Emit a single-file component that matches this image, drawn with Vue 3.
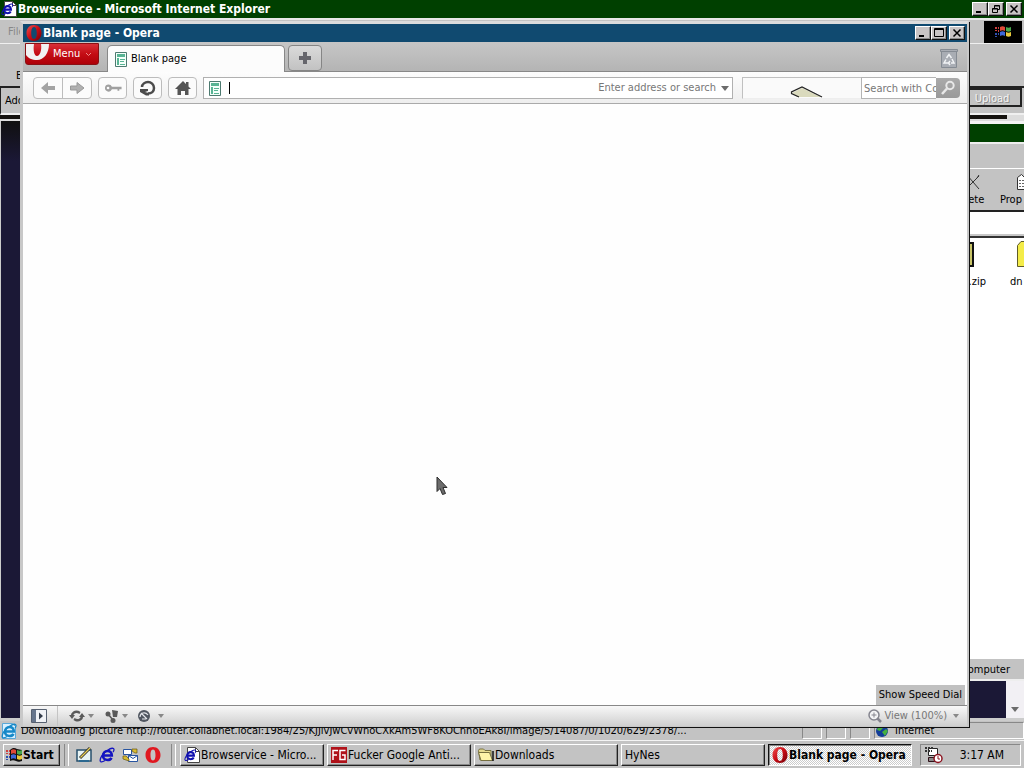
<script setup>
import { ref } from 'vue'

const address = ref('')
const search = ref('')
const tasks = [
  { icon: 'ie', label: 'Browservice - Micro...' },
  { icon: 'fg', label: 'Fucker Google Anti...' },
  { icon: 'folder', label: 'Downloads' },
  { icon: '', label: 'HyNes' },
  { icon: 'opera', label: 'Blank page - Opera', active: true }
]
</script>

<template>
  <svg class="defs" aria-hidden="true">
    <defs>
      <linearGradient id="red" x1="0" y1="0" x2="1" y2="1">
        <stop offset="0" stop-color="#f05050" /><stop offset=".5" stop-color="#c80c14" /><stop offset="1" stop-color="#700008" />
      </linearGradient>
      <symbol id="opera" viewBox="0 0 16 16">
        <path fill="url(#red)" fill-rule="evenodd" d="M8 0C3.500 0 .5 3.500.5 8s3 8 7.500 8 7.500-3.500 7.500-8S12.500 0 8 0zm0 2c2 0 2.800 3 2.800 6S10 14 8 14s-2.800-3-2.800-6S6 2 8 2z" />
      </symbol>
      <symbol id="ie-e" viewBox="0 0 16 16">
        <path fill="none" stroke="currentColor" stroke-width="2.600" d="M4.500 8.500h8.300C12.800 5.500 11 4 8.500 4S4 6 4 8.700 6 13 8.500 13c2 0 3.300-.8 4-2.200" />
        <path fill="none" stroke="currentColor" stroke-width="1.300" d="M1.500 14.500C0 12 4 6 9 3c3-2 6-2.500 6-.5 0 1-.5 2-1 2.500M1.500 14.500c1 .8 3 0 4.500-1" />
      </symbol>
      <symbol id="ie" viewBox="0 0 16 16">
        <path fill="#fff" stroke="#444" d="M3.500.5h8l4 4v11h-12z" />
        <path fill="none" stroke="#444" d="M11.500.5v4h4" />
        <g color="#1010b0" transform="translate(0 2) scale(.78)">
          <use href="#ie-e" width="16" height="16" />
        </g>
      </symbol>
      <symbol id="fg" viewBox="0 0 16 16">
        <path fill="#b0121a" d="M0 0h16v16H0z" />
        <path fill="none" stroke="#fff" stroke-width="1.500" d="M2 13V3.500h5M2 8h4M14.500 3.500H9v9h5V8h-3" />
      </symbol>
      <symbol id="folder" viewBox="0 0 16 16">
        <path fill="#e8dc90" stroke="#777040" d="M.5 3.500l1-1.500h4l1.500 1.500h6v9.500h-11z" />
        <path fill="#fff4a8" stroke="#777040" d="M.5 5.500h11l3 8H3z" />
        <path stroke="#111" stroke-width="1.500" d="M15 4v10" />
      </symbol>
      <symbol id="page" viewBox="0 0 12 15">
        <path fill="#f4fffa" stroke="#4d7a70" d="M.5.500h11v14H.5z" />
        <path fill="#58b494" d="M2 2h8v3H2zM2 6h2v7H2z" />
        <path stroke="#58b494" d="M5 7.500h5M5 9.500h4M5 12.500h5" />
      </symbol>
      <symbol id="flag" viewBox="0 0 18 16">
        <path fill="#e04a38" d="M6 3c2-1 3-1 5 0v4c-2-1-3-1-5 0z" />
        <path fill="#49a84c" d="M12 3c2 1 3 1 5 0v4c-2 1-3 1-5 0z" />
        <path fill="#3c66d8" d="M6 8c2-1 3-1 5 0v4c-2-1-3-1-5 0z" />
        <path fill="#e8c83c" d="M12 8c2 1 3 1 5 0v4c-2 1-3 1-5 0z" />
        <path fill="#d04040" d="M1 3h2v2H1zm3 0h1v2H4zM1 6h2v1H1zm3 0h1v2H4z" />
        <path fill="#3050b0" d="M1 9h2v2H1zm3 0h1v2H4zM1 12h2v1H1z" />
      </symbol>
    </defs>
  </svg>

  <div class="desktop">
    <main class="area">
      <section class="ie">
        <header class="title green">
          <svg class="i16"><use href="#ie" /></svg>
          <h1>Browservice - Microsoft Internet Explorer</h1>
          <span class="winbtns">
            <button aria-label="Minimize"><svg viewBox="0 0 12 10"><path d="M2 8h5" /></svg></button>
            <button aria-label="Restore"><svg viewBox="0 0 12 10"><path class="thin" d="M4.500 4V1.500h5v4H8M2.500 4.500h5v4h-5zM2.500 5h5M4.500 2h5" /></svg></button>
            <button class="gap" aria-label="Close"><svg viewBox="0 0 12 10"><path class="cross" d="M2.500 1.500l7 7M9.500 1.500l-7 7" /></svg></button>
          </span>
        </header>
        <div class="ie-menu">
          <button class="ghost">File</button>
          <span class="throbber"><svg><use href="#flag" /></svg></span>
        </div>
        <div class="ie-tools"><button>Back</button></div>
        <div class="ie-address">
          <span>Address</span>
          <span class="download">Upload</span>
        </div>
        <div class="ie-line"></div>
        <div class="ie-view"><div class="ie-scroll"><i class="down"></i></div></div>
        <footer class="ie-status">
          <svg class="i16" viewBox="0 0 16 16"><path fill="#d8f0ff" stroke="#5aa8d8" d="M1.500.5h10l3 3v12h-13z" /><g color="#1688c8"><use href="#ie-e" /></g></svg>
          <span class="msg">Downloading picture http://router.collabnet.local:1984/25/KJJivJwCvWnoCXkAm5WF8KOCnhoEAk8I/image/5/14087/0/1020/629/2378/...</span>
          <i class="cell"></i><i class="cell"></i><i class="cell"></i>
          <span class="zone">
            <svg class="i16" viewBox="0 0 16 16"><circle cx="7" cy="8" r="6" fill="#123c98" /><path fill="#45b040" d="M3 4l4-2 1 3-3 3-3-1zM7 9l4-3 2 2-3 5z" /><path fill="#90d8ff" d="M9 2l3 2-3 1z" /></svg>
            Internet
          </span>
        </footer>
      </section>

      <section class="explorer">
        <header class="title green"></header>
        <div class="ex-menu"></div>
        <div class="ex-tools">
          <button class="del"><svg viewBox="0 0 16 16"><path fill="none" stroke="#333" d="M3 1l12 14M15 2L3 14M13 4l2-3" /></svg>Delete</button>
          <button class="prop"><svg viewBox="0 0 16 16"><path fill="#fff" stroke="#333" d="M.5 3.500l4-3 3 3h8v12H.5z" /><path stroke="#666" stroke-dasharray="2 1" d="M2 6.500h12M2 9.500h12M2 12.500h12" /></svg>Prop</button>
        </div>
        <div class="ex-address"></div>
        <div class="ex-files">
          <figure class="f1"><svg viewBox="0 0 30 26"><path fill="#c8c468" stroke="#111" stroke-width="2" d="M1 2h28v23H1z" /></svg><figcaption>hynes.zip</figcaption></figure>
          <figure class="f2"><svg viewBox="0 0 30 26"><path fill="#f4ec48" stroke="#605c28" d="M.5 4.500L4 .5h10l3 3h12.500v22H.5z" /></svg><figcaption>dn</figcaption></figure>
        </div>
        <footer class="ex-status">My Computer</footer>
      </section>

      <section class="opera">
        <header class="title blue">
          <svg class="i16"><use href="#opera" /></svg>
          <h2>Blank page - Opera</h2>
          <span class="winbtns">
            <button aria-label="Minimize"><svg viewBox="0 0 12 10"><path d="M2 8h5" /></svg></button>
            <button aria-label="Maximize"><svg viewBox="0 0 12 10"><path class="thin" d="M1.500.5h9v8h-9zM1.500 1.500h9" /></svg></button>
            <button class="gap" aria-label="Close"><svg viewBox="0 0 12 10"><path class="cross" d="M2.500 1.500l7 7M9.500 1.500l-7 7" /></svg></button>
          </span>
        </header>
        <nav class="tabs">
          <button class="menu">
            <svg class="bigo" viewBox="0 0 24 20"><path fill="#f2f2f2" fill-rule="evenodd" d="M0 0h23c0 9-5 16-12 16C6 16 2 14 0 11zM8 0c-1 6 0 12 3 12s5-6 4-12z" /></svg>
            Menu
            <svg class="chev" viewBox="0 0 7 5"><path fill="none" stroke="#ee8a8a" d="M1 1l2.500 2.500L6 1" /></svg>
          </button>
          <button class="tab"><svg><use href="#page" /></svg>Blank page</button>
          <button class="newtab" aria-label="New tab"><svg viewBox="0 0 12 12"><path fill="#66666c" d="M4 0h4v4h4v4H8v4H4V8H0V4h4z" /></svg></button>
          <button class="trash" aria-label="Closed tabs">
            <svg viewBox="0 0 18 19"><path fill="#a9adb4" stroke="#858b93" d="M1.500 2.500h15v16h-15zM.5.500h17v2H.5z" /><path fill="none" stroke="#f2f4f6" stroke-width="1.500" d="M6.500 9L9 5.500 11.500 9M12 10l2 4h-3M8 14H4l2-3.500M10 12l-1.500 2L10 16" /></svg>
          </button>
        </nav>
        <form class="nav" @submit.prevent>
          <span class="pair">
            <button type="button" aria-label="Back"><svg viewBox="0 0 18 16"><path fill="#a3a3a3" d="M2 8l7-6v4h7v4H9v4z" /></svg></button>
            <button type="button" aria-label="Forward"><svg viewBox="0 0 18 16"><path fill="#b0b0b0" stroke="#999" d="M16 8L9 2.500v3.500H2.500v4H9v3.500z" /></svg></button>
          </span>
          <button class="nb" type="button" aria-label="Log in"><svg viewBox="0 0 20 16"><path fill="#a0a0a0" fill-rule="evenodd" d="M5 4a4 4 0 1 0 3.800 5.500H15V11h2V9.500h2.500v-3H8.800A4 4 0 0 0 5 4zm-.5 2.500a1.500 1.500 0 1 1 0 3 1.500 1.500 0 0 1 0-3z" /></svg></button>
          <button class="nb" type="button" aria-label="Reload"><svg viewBox="0 0 18 16"><path fill="none" stroke="#4c4c4c" stroke-width="2.500" d="M3 7c0-3 3-5 6-5s6 2.500 6 6-2.500 5.500-6 5.500" /><path fill="#4c4c4c" d="M1 9h8v2l-3 1 4 1v2.500H7L1 12z" /></svg></button>
          <button class="nb" type="button" aria-label="Home"><svg viewBox="0 0 18 16"><path fill="#555" d="M9 1l3 3V2h2.500v4.500L17 9h-2.500v6H11v-4H7v4H3.500V9H1z" /></svg></button>
          <label class="addr">
            <svg><use href="#page" /></svg>
            <i class="caret"></i>
            <input v-model="address" aria-label="Address" placeholder="Enter address or search" />
            <i class="down"></i>
          </label>
          <div class="panel">
            <svg viewBox="0 0 34 12"><path fill="#dadabd" d="M2 7l10-5 19 9H7z" /><path fill="none" stroke="#222" stroke-width="1.200" d="M9 11L1.500 7.500V6L12 1l20 10" /></svg>
          </div>
          <input class="search" v-model="search" aria-label="Search" placeholder="Search with Comcast" />
          <button class="go" aria-label="Search"><svg viewBox="0 0 16 16"><circle cx="10" cy="5.500" r="3.700" fill="none" stroke="#e8e8e8" stroke-width="2" /><path stroke="#e8e8e8" stroke-width="2.500" d="M7 8.500L2 14" /></svg></button>
        </form>
        <div class="page">
          <div class="tip">Show Speed Dial</div>
        </div>
        <footer class="op-status">
          <button class="side" aria-label="Panels"><svg viewBox="0 0 16 14"><path fill="#f0f2f6" stroke="#566070" d="M.5.500h15v13H.5z" /><path fill="#66758c" d="M1 1h4v12H1z" /><path fill="#333c4a" d="M8 3.500l4 3.500-4 3.500z" /></svg></button>
          <button class="sb" aria-label="Synchronize"><svg viewBox="0 0 16 14"><path fill="none" stroke="#5a5a5a" stroke-width="2.500" d="M3 7c0-3 3-5 6-4l2 1M13 7c0 3-3 5-6 4l-2-1" /><path fill="#5a5a5a" d="M0 6h6L3 10zM10 8h6l-3-4z" /></svg><i class="down"></i></button>
          <button class="sb" aria-label="Unite"><svg viewBox="0 0 14 14"><g fill="#5a5a5a"><circle cx="3" cy="5" r="2.500" /><path d="M7 1l6 1-1 6H8z" /><circle cx="8" cy="11.500" r="2.500" /></g><path stroke="#5a5a5a" stroke-width="1.500" d="M3 5l5 6" /></svg><i class="down"></i></button>
          <button class="sb turbo" aria-label="Turbo"><svg viewBox="0 0 14 14"><circle cx="7" cy="7" r="6" fill="#505660" /><path fill="none" stroke="#e4e6ea" stroke-width="1.200" d="M4 4l6 6M3 8c0-4 5-6 8-2M5 10h4" /></svg><i class="down"></i></button>
          <button class="view"><svg viewBox="0 0 14 14"><path stroke="#85858f" stroke-width="2.500" d="M9 9l4 4" /><circle cx="6" cy="6" r="5" fill="#f4f4f6" stroke="#85858f" stroke-width="1.500" /><path stroke="#85858f" d="M3.500 6h5M6 3.500v5" /></svg>View (100%)<i class="down"></i></button>
        </footer>
      </section>

      <svg class="cursor" viewBox="0 0 12 20"><path fill="#6c6c6c" stroke="#2c2c2c" d="M1 1v14.500l3-3 2.500 6 3-1-2.500-6H11z" /></svg>
    </main>

    <footer class="taskbar">
      <button class="start">
        <svg viewBox="0 0 18 16"><path fill="#111" d="M5 3c3-3 5-2 7-1l5 1v11c-3 1-4 1-6 0s-4-1-6 0z" /><use href="#flag" /></svg>Start
      </button>
      <i class="grip"></i>
      <div class="quick">
        <button aria-label="Show Desktop"><svg viewBox="0 0 16 16"><path fill="#e8f4f4" stroke="#29506c" stroke-width="1.500" d="M1 3h14v11H1z" /><path stroke="#2c6890" stroke-width="2" d="M3 14h10" /><path stroke="#333" stroke-width="3" d="M4 11L14 1" /><path stroke="#e8d050" stroke-width="1.200" d="M4.500 10.500L14 1" /></svg></button>
        <button aria-label="Internet Explorer"><svg class="blue-e"><use href="#ie-e" /></svg></button>
        <button aria-label="Outlook Express"><svg viewBox="0 0 16 16"><path fill="#fff" stroke="#2854a0" d="M1.500 2.500h8v5h-8zM6.500 8.500h9v6h-9z" /><path fill="none" stroke="#2854a0" d="M6.500 8.500l4.500 3 4.500-3" /><path fill="#d8bc30" stroke="#665514" stroke-width=".7" d="M10 2h5v4h-2L10 4zM1 9h3l3 3v2L1 12z" /></svg></button>
        <button aria-label="Opera"><svg viewBox="0 0 16 16"><path fill="#e01820" fill-rule="evenodd" d="M8 0C3.500 0 .5 3.500.5 8s3 8 7.500 8 7.500-3.500 7.500-8S12.500 0 8 0zm0 2.500c2 0 2.500 3 2.500 5.500s-.5 5.500-2.500 5.500S5.500 10.500 5.500 8 6 2.500 8 2.500z" /></svg></button>
      </div>
      <i class="grip"></i>
      <div class="tasks">
        <button v-for="t in tasks" :key="t.label" :class="{ active: t.active }">
          <svg v-if="t.icon" class="i16"><use :href="'#' + t.icon" /></svg><span>{{ t.label }}</span>
        </button>
      </div>
      <div class="tray">
        <svg viewBox="0 0 18 18"><path fill="#fff" stroke="#222" d="M3.500 2.500h9v7h-9z" /><path stroke="#333" stroke-width="2" stroke-dasharray="2 1" d="M0 2h8M0 5h7" /><path fill="#888" stroke="#301018" d="M3.500 11.500h8v4h-8z" /><circle cx="13" cy="12.500" r="4" fill="#fff" stroke="#8c1420" stroke-width="1.500" /><path fill="none" stroke="#8c1420" d="M13 10v3h2" /></svg>
        <time>3:17 AM</time>
      </div>
    </footer>
  </div>
</template>

<style>
html, body { margin: 0; height: 100%; overflow: hidden; }
</style>

<style scoped>
.defs { position: absolute; width: 0; height: 0; }
.desktop {
  height: 100vh; display: flex; flex-direction: column; overflow: hidden; background: #c3c3c3; color: #000;
  font: 11px/14px "DejaVu Sans Condensed", "DejaVu Sans", sans-serif; white-space: nowrap;
}
.desktop * { box-sizing: border-box; }
button, input { font: inherit; color: inherit; padding: 0; margin: 0; border: 0; background: none; }
svg { display: block; flex: none; }
.i16 { width: 16px; height: 16px; }
.area { flex: 1; position: relative; min-height: 0; overflow: hidden; }
.down { flex: none; border: 4px solid transparent; border-top: 5px solid #6c6c6c; border-bottom: 0; }

.title { display: flex; align-items: center; height: 18px; flex: none; color: #fff; padding: 0 2px; }
.title h1, .title h2 { margin: 0 0 0 1px; font-size: 12px; line-height: 16px; font-weight: bold; }
.green { background: #004000; }
.blue { background: #104a70; }
.winbtns { margin-left: auto; display: flex; }
.winbtns button {
  width: 16px; height: 14px; background: #c8c4c4; display: grid; place-items: center;
  border: 1px solid; border-color: #fff #111 #111 #fff; box-shadow: inset -1px -1px #888;
}
.winbtns .gap { margin-left: 2px; }
.winbtns svg { width: 12px; height: 10px; }
.winbtns path { fill: none; stroke: #000; stroke-width: 2; }
.winbtns .thin { stroke-width: 1; }
.winbtns .cross { stroke-width: 1.500; }

.ie { position: absolute; inset: 0; display: flex; flex-direction: column; }
.ie > .title { padding-left: 1px; }
.ie-menu { display: flex; justify-content: space-between; height: 26px; padding: 1px 2px 0 2px; border-top: 2px solid #e8e8e8; border-bottom: 1px solid #f0f0f0; }
.ghost { color: #888; padding-left: 6px; }
.throbber { width: 38px; background: #000; display: grid; place-items: center; }
.throbber svg { width: 18px; height: 16px; }
.ie-tools { height: 44px; padding: 25px 16px 0; display: flex; align-items: flex-start; border-bottom: 2px solid #222; }
.ie-address { height: 27px; display: flex; justify-content: space-between; align-items: center; border-left: 1px solid #222; padding: 0 2px 0 4px; border-bottom: 2px solid #f0f0f0; }
.download { width: 56px; height: 19px; margin-bottom: 6px; padding-right: 4px; text-align: center; line-height: 17px; border: 2px solid; border-color: #222 #222 #222 #fff; color: #f4f4f4; text-shadow: 1px 1px #888; }
.ie-line { height: 6px; background: #15120f; border: solid #ddd; border-width: 0 17px 2px 0; }
.ie-view { flex: 1; background: linear-gradient(#101010, #1b1836 40px); display: flex; justify-content: flex-end; border: solid #ccc; border-width: 0 0 3px 1px; }
.ie-scroll { width: 18px; background: #f2f0f4; display: flex; flex-direction: column; justify-content: flex-end; align-items: center; padding-bottom: 6px; }
.ie-status { height: 19px; display: flex; align-items: center; gap: 4px; background: #c3c3c3; padding-left: 1px; }
.msg { flex: 1; overflow: hidden; }
.cell { width: 20px; height: 16px; border: 1px solid; border-color: #888 #fff #fff #888; }
.zone { width: 150px; height: 17px; display: flex; align-items: center; gap: 4px; border: 1px solid; border-color: #888 #fff #fff #888; }

.explorer { position: absolute; right: 0; top: 121px; bottom: 59px; width: 300px; display: flex; flex-direction: column; background: #c3c3c3; border-top: 3px solid #f4f4f4; overflow: hidden; }
.ex-menu { height: 27px; border-top: 2px solid #eee; border-bottom: 1px solid #fff; }
.ex-tools { height: 43px; display: flex; justify-content: flex-end; border-bottom: 2px solid #222; }
.ex-tools button { display: flex; flex-direction: column; align-items: center; gap: 3px; padding-top: 5px; }
.ex-tools svg { width: 16px; height: 16px; }
.ex-tools .prop { align-items: flex-start; width: 24px; }
.ex-tools .prop svg { margin-left: 17px; }
.ex-tools .del { width: 40px; margin-right: 12px; }
.ex-tools .del svg { margin-left: 8px; }
.ex-address { height: 24px; background: #fff; border-bottom: 2px solid #c8c8c8; }
.ex-files { flex: 1; display: flex; justify-content: flex-end; background: #fff; border-top: 2px solid #333; }
.ex-files figure { margin: 3px 0 0; display: flex; flex-direction: column; align-items: center; gap: 8px; }
.ex-files svg { width: 30px; height: 26px; }
.ex-files .f1 { width: 60px; margin-right: 20px; }
.ex-files .f1 figcaption { align-self: flex-end; padding-right: 4px; }
.ex-files .f1 svg { margin-right: 3px; }
.ex-files .f2 { width: 14px; align-items: flex-start; }
.ex-files .f2 svg { margin-left: 7px; }
.ex-status { height: 22px; padding: 4px 14px; text-align: right; border-bottom: 2px solid #eee; }

.opera { position: absolute; left: 20px; right: 55px; top: 21px; bottom: 13px; display: flex; flex-direction: column; background: #fefefe; border: 3px solid #c8c8c8; border-top-color: #dcdcdc; border-right-width: 2px; border-bottom-width: 1px; box-shadow: 1px 1px #111; }
.opera .title { height: 18px; padding-left: 3px; }
.tabs { display: flex; height: 30px; flex: none; background: linear-gradient(#c6c6c6, #b4b4b4); border-bottom: 1px solid #888; }
.menu { position: relative; display: flex; align-items: center; width: 74px; height: 22px; margin: 1px 8px 0 2px; padding-left: 27px; color: #fff; background: linear-gradient(#d83038, #c40c14 50%, #ae0008); border: 1px solid #8a1014; border-radius: 0 0 3px 3px; }
.bigo { position: absolute; left: 0; top: 0; width: 24px; height: 20px; }
.chev { width: 7px; height: 5px; margin-left: 5px; }
.tab { display: flex; align-items: center; gap: 4px; width: 178px; height: 27px; margin-top: 3px; padding: 0 7px; background: #fcfcfc; border-radius: 5px 5px 0 0; border: 1px solid #888; border-bottom: 0; }
.tab svg, .addr svg { width: 12px; height: 15px; }
.newtab { width: 34px; height: 26px; margin: 3px 0 0 3px; display: grid; place-items: center; background: linear-gradient(#dadada, #c2c2c2); border: 1px solid #858585; border-radius: 4px; }
.newtab svg { width: 12px; height: 12px; }
.trash { margin: 7px 9px 0 auto; align-self: flex-start; }
.trash svg { width: 18px; height: 19px; }
.nav { display: flex; flex: none; height: 32px; padding: 5px 7px 5px 10px; background: linear-gradient(#fdfdfd, #eee); border-bottom: 1px solid #aaa; color: #777; }
.pair, .nb { display: flex; height: 22px; background: #fbfbfb; border: 1px solid #bcbcbc; border-radius: 4px; }
.pair { width: 59px; margin-right: 6px; }
.pair button { flex: 1; display: grid; place-items: center; }
.pair button + button { border-left: 1px solid #bcbcbc; }
.pair svg, .nb svg { width: 18px; height: 16px; }
.nb { width: 29px; margin-right: 6px; align-items: center; justify-content: center; }
.addr { flex: 1; display: flex; align-items: center; height: 22px; background: #fff; border: 1px solid #b0b0b0; padding: 0 3px 0 5px; }
.caret { width: 1px; height: 12px; background: #000; margin-left: 8px; }
.addr input { flex: 1; min-width: 0; text-align: right; margin-right: 5px; outline: 0; }
input::placeholder { color: #777; opacity: 1; }
.panel { width: 119px; height: 22px; margin-left: 9px; display: flex; align-items: flex-end; justify-content: center; border: 1px solid #c0c0c0; border-right: 0; border-bottom-color: #eee; background: #fafafa; padding-left: 10px; }
.panel svg { width: 34px; height: 12px; }
.search { width: 75px; height: 22px; border: 1px solid #b4b4b4; border-right: 0; background: #fff; padding-left: 2px; outline: 0; }
.go { width: 24px; height: 20px; margin-top: 1px; display: grid; place-items: center; background: linear-gradient(#aaa, #999); border-radius: 0 4px 4px 0; }
.go svg { width: 16px; height: 16px; }
.page { flex: 1; display: flex; align-items: flex-end; justify-content: flex-end; background: #fefefe; }
.tip { height: 20px; padding: 3px; margin-right: 2px; background: #c0c0c0; }
.op-status { display: flex; align-items: center; flex: none; height: 21px; border-top: 1px solid #888; background: linear-gradient(#f8f8f8, #cfcfcf); }
.op-status .down { border-width: 4px 3px 0; border-top-color: #888; }
.side { height: 20px; padding: 0 10px 0 8px; border-right: 1px solid #c4c4c4; display: grid; place-items: center; }
.side svg { width: 16px; height: 14px; }
.sb { display: flex; align-items: center; gap: 3px; margin-left: 11px; }
.sb svg { width: 14px; height: 14px; }
.sb:nth-child(2) svg { width: 16px; }
.turbo { gap: 7px; margin-left: 9px; }
.view { display: flex; align-items: center; gap: 2px; margin-left: auto; padding-right: 8px; color: #777; }
.view svg { width: 14px; height: 14px; }
.view .down { margin-left: 4px; }

.cursor { position: absolute; left: 436px; top: 476px; width: 12px; height: 20px; }

.taskbar { flex: none; height: 28px; display: flex; align-items: center; gap: 4px; padding: 2px 3px; background: #c3c3c3; border-top: 1px solid #f4f4f4; font-size: 12px; }
.start { display: flex; align-items: center; width: 57px; height: 22px; padding-left: 1px; font-weight: bold; border: 1px solid; border-color: #fff #222 #222 #fff; box-shadow: inset -1px -1px #888; }
.start svg { width: 18px; height: 16px; }
.grip { width: 5px; height: 22px; border: solid; border-width: 0 1px 0 1px; border-color: #888 #fff #fff #888; }
.quick { display: flex; gap: 7px; width: 94px; padding-left: 3px; }
.quick svg { width: 16px; height: 16px; }
.blue-e { color: #1414c0; }
.tasks { flex: 1; min-width: 0; display: flex; gap: 3px; }
.tasks button { flex: 1; min-width: 0; display: flex; align-items: center; height: 22px; padding: 0 3px; border: 1px solid; border-color: #fff #222 #222 #fff; box-shadow: inset -1px -1px #888; overflow: hidden; }
.tasks svg { margin-right: 1px; }
.tasks .active { font-weight: bold; background: repeating-conic-gradient(#fff 0 25%, #ccc 0 50%) 0 0 / 2px 2px; border-color: #111 #fff #fff #111; box-shadow: inset 1px 1px #888; }
.tray { width: 101px; height: 22px; display: flex; align-items: center; justify-content: space-between; padding: 0 16px 0 4px; margin-left: 4px; border: 1px solid; border-color: #888 #fff #fff #888; }
.tray svg { width: 18px; height: 18px; }
</style>
